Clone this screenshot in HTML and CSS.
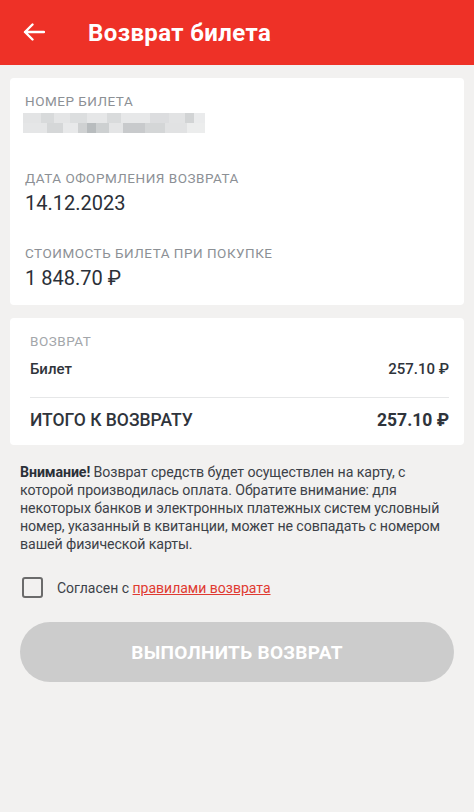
FILE: index.html
```html
<!DOCTYPE html>
<html lang="ru">
<head>
    <meta charset="UTF-8">
    <title>Возврат билета</title>
    <link rel="stylesheet" href="styles.css">
</head>
<body>

<div class="header">
    <svg class="back" width="22" height="18" viewBox="0 0 22 18">
        <path d="M21 9H2M9.5 1.5L2 9l7.5 7.5" fill="none" stroke="#fff" stroke-width="2.4" stroke-linecap="round" stroke-linejoin="round"/>
    </svg>
    <h1>Возврат билета</h1>
</div>

<div class="content">
    <div class="card info">
        <div class="field">
            <div class="label">Номер билета</div>
            <div class="blur"></div>
        </div>
        <div class="field">
            <div class="label">Дата оформления возврата</div>
            <div class="value">14.12.2023</div>
        </div>
        <div class="field">
            <div class="label">Стоимость билета при покупке</div>
            <div class="value">1 848.70 ₽</div>
        </div>
    </div>

    <div class="card refund">
        <div class="label light">Возврат</div>
        <div class="row">
            <span>Билет</span>
            <span>257.10 ₽</span>
        </div>
        <div class="row total">
            <span>ИТОГО К ВОЗВРАТУ</span>
            <span>257.10 ₽</span>
        </div>
    </div>

    <p class="note"><b>Внимание!</b> Возврат средств будет осуществлен на карту, с которой производилась оплата. Обратите внимание: для некоторых банков и электронных платежных систем условный номер, указанный в квитанции, может не совпадать с номером вашей физической карты.</p>

    <label class="agree">
        <span class="box"></span>
        <span>Согласен с <a href="#">правилами возврата</a></span>
    </label>

    <button class="submit" disabled>ВЫПОЛНИТЬ ВОЗВРАТ</button>
</div>

</body>
</html>
```

FILE: styles.css
```css
body {
    margin: 0;
    background-color: #f2f1f0;
    font-family: Roboto, "Noto Sans", sans-serif;
    color: #2f343b;
}
.header {
    display: flex;
    align-items: center;
    height: 65px;
    background-color: #ee3127;
    padding: 0 0 0 23px;
}
.header .back {
    margin-top: -1px;
}
.header h1 {
    margin: 0 0 0 43px;
    color: #fff;
    font-size: 24px;
    font-weight: 700;
    letter-spacing: 0.4px;
}
.content {
    padding: 13px 10px 0;
}
.card {
    background-color: #fff;
    border-radius: 4px;
}
.info {
    padding: 15px 15px 14px;
}
.field {
    margin-bottom: 29px;
}
.field:first-child {
    margin-bottom: 37px;
}
.field:last-child {
    margin-bottom: 0;
}
.label {
    font-size: 13.5px;
    line-height: 16px;
    text-transform: uppercase;
    color: #8c9095;
    letter-spacing: 0.5px;
}
.label.light {
    color: #a3a6aa;
}
.value {
    font-size: 20px;
    line-height: 26px;
    margin-top: 4px;
    color: #2b3038;
}
.blur {
    width: 182px;
    height: 20px;
    margin-top: 4px;
    margin-left: -2px;
    background:
        linear-gradient(90deg, #e3e4e5 0 10%, #d8dadb 10% 17%, #e4e5e6 17% 26%, #dcdedf 26% 35%, #e6e7e8 35% 46%, #d9dbdc 46% 54%, #e7e8e9 54% 70%, #dcdddf 70% 80%, #e2e3e4 80% 89%, #d2d4d5 89% 94%, #eaebec 94%) top / 100% 50% no-repeat,
        linear-gradient(90deg, #e5e6e7 0 13%, #d5d7d8 13% 22%, #e8e9ea 22% 30%, #cfd1d2 30% 35%, #b8bcbe 35% 40%, #cdd0d1 40% 47%, #e4e5e6 47% 55%, #c8cacc 55% 67%, #d4d6d7 67% 78%, #e1e2e3 78% 90%, #eceded 90%) bottom / 100% 50% no-repeat;
}
.refund {
    margin-top: 13px;
    padding: 15px 15px 7px 20px;
}
.row {
    display: flex;
    justify-content: space-between;
    align-items: center;
    font-size: 15px;
    font-weight: 500;
    height: 30px;
    margin-top: 5px;
    padding-bottom: 13px;
}
.row.total {
    margin-top: 0;
    padding: 4px 0 0;
    border-top: 1px solid #e6e7e8;
    font-size: 17.5px;
    height: 36px;
}
.row.total span:last-child {
    font-weight: 700;
}
.note {
    margin: 18px 10px 0 10px;
    font-size: 14.2px;
    line-height: 18px;
    letter-spacing: -0.1px;
    color: #3c4148;
}
.note b {
    color: #2b3038;
}
.agree {
    display: flex;
    align-items: center;
    margin: 24px 0 0 12px;
    font-size: 14px;
    color: #3c4148;
}
.agree .box {
    width: 17px;
    height: 17px;
    border: 2px solid #6b6b6b;
    border-radius: 3px;
    margin-right: 14px;
}
.agree a {
    color: #e03a31;
    text-decoration: underline;
}
.submit {
    display: block;
    width: 434px;
    height: 60px;
    margin: 24px 0 0 10px;
    border: none;
    border-radius: 30px;
    background-color: #cccccc;
    color: #fff;
    font-family: Roboto, "Noto Sans", sans-serif;
    font-size: 19px;
    font-weight: 700;
    letter-spacing: 0.3px;
}
```
